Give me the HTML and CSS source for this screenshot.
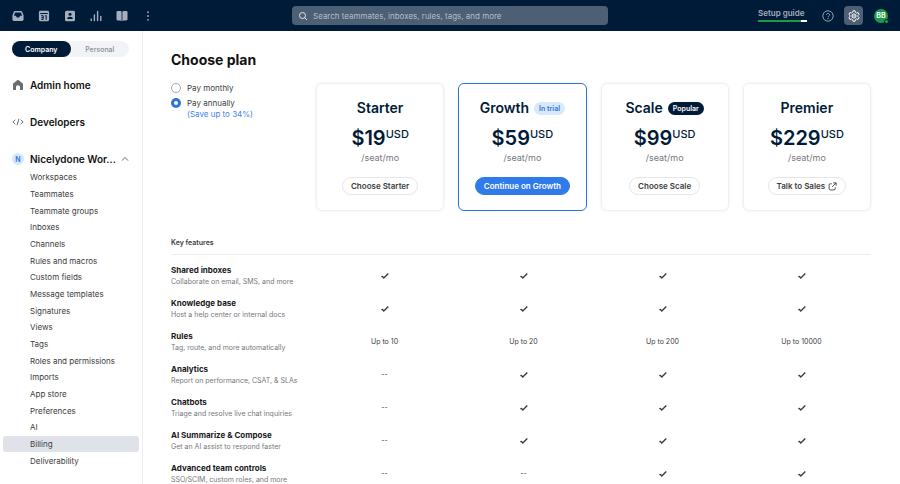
FILE: index.html
```html
<!DOCTYPE html>
<html lang="en">
<head>
  <meta charset="UTF-8">
  <meta name="viewport" content="width=device-width, initial-scale=1.0">
  <title>Choose plan</title>
  <link rel="stylesheet" href="styles.css">
</head>
<body>

  <!-- Shared icons -->
  <svg class="sprite" aria-hidden="true">
    <symbol id="check" viewBox="0 0 10 10">
      <path d="M1.300 5.600 2.400 5.500 3.800 7 8.300 2.500" fill="none" stroke="currentColor" stroke-width="1.400"/>
    </symbol>
  </svg>

  <header class="topbar">
    <nav class="apps" aria-label="Apps">
      <a href="#" aria-label="Inbox">
        <svg viewBox="0 0 12 12"><path fill="currentColor" fill-rule="evenodd" d="M3 1h6c.6 0 1 .3 1.200.8L11.600 5.500V9.200c0 1-.7 1.700-1.700 1.700H2.100C1.100 10.900.4 10.200.4 9.200V5.500L1.800 1.800C2 1.300 2.400 1 3 1Zm.1 1.400L1.900 5.700h2c.3 1.300 1.100 1.900 2.100 1.900s1.800-.6 2.100-1.900h2L8.900 2.400Z"/></svg>
      </a>
      <a href="#" aria-label="Calendar">
        <svg viewBox="0 0 12 12"><path fill="currentColor" fill-rule="evenodd" d="M2.500.8h7c.9 0 1.600.7 1.600 1.600v7.200c0 .9-.7 1.600-1.600 1.600h-7C1.600 11.200.9 10.500.9 9.600V2.400C.9 1.500 1.600.8 2.500.8ZM2.200 3v1h7.600V3Z"/><path fill="none" stroke="#001b38" d="M3.200 5.700h2v3.700h-2M3.500 7.500h1.700M7 6.100l1.200-.6v4.300"/></svg>
      </a>
      <a href="#" aria-label="Contacts">
        <svg viewBox="0 0 12 12"><rect x="1" y=".8" width="10" height="10.400" rx="1.500" fill="currentColor"/><circle cx="6" cy="4.300" r="1.500" fill="#001b38"/><path fill="#001b38" d="M3.200 9c0-1.500 1-2.300 2.800-2.300S8.800 7.500 8.800 9Z"/></svg>
      </a>
      <a href="#" aria-label="Analytics">
        <svg viewBox="0 0 12 12"><path fill="none" stroke="currentColor" stroke-width="1.400" stroke-linecap="round" d="M1.200 9v1.500M4.400 5v5.500M7.600 1.500v9M10.800 6.500v4"/></svg>
      </a>
      <a href="#" aria-label="Knowledge base">
        <svg viewBox="0 0 12 12"><path fill="currentColor" d="M1.800 1h2.400c.8 0 1.400.5 1.400 1.200v9c-.4-.5-.9-.7-1.500-.7H1.800c-.8 0-1.300-.5-1.300-1.200V2.200C.5 1.500 1 1 1.800 1ZM10.200 1H7.800c-.8 0-1.400.5-1.400 1.200v9c.4-.5.9-.7 1.500-.7h2.300c.8 0 1.300-.5 1.300-1.200V2.200c0-.7-.5-1.200-1.300-1.200Z"/></svg>
      </a>
      <a href="#" aria-label="More">
        <svg viewBox="0 0 12 12"><g fill="currentColor"><circle cx="6" cy="2.200" r=".9"/><circle cx="6" cy="6" r=".9"/><circle cx="6" cy="9.800" r=".9"/></g></svg>
      </a>
    </nav>

    <label class="search">
      <svg viewBox="0 0 10 10" aria-hidden="true"><g fill="none" stroke="currentColor"><circle cx="4.500" cy="4.500" r="3"/><path d="m6.700 6.700 2.300 2.300"/></g></svg>
      <input type="search" aria-label="Search" placeholder="Search teammates, inboxes, rules, tags, and more">
    </label>

    <div class="tools">
      <a class="setup" href="#">Setup guide<span class="progress"><span class="progress-fill"></span></span></a>
      <button class="tool" aria-label="Help">
        <svg viewBox="0 0 12 12"><g fill="none" stroke="currentColor" stroke-width=".9"><circle cx="6" cy="6" r="5.200"/><path d="M4.500 4.900c0-2 3.100-2 3.100-.1 0 1.200-1.600 1.200-1.600 2.400"/></g><circle cx="6" cy="8.700" r=".6" fill="currentColor"/></svg>
      </button>
      <button class="tool tool-active" aria-label="Settings">
        <svg viewBox="0 0 12 12"><g fill="none" stroke="currentColor" stroke-linejoin="round"><path d="M5 .8h2l.4 1.500 1.200.7 1.500-.4 1 1.700L10 5.400v1.200l1.100 1.100-1 1.700L8.600 9l-1.200.7L7 11.200H5l-.4-1.500L3.400 9l-1.500.4-1-1.700L2 6.600V5.400L.9 4.300l1-1.700 1.500.4 1.200-.7Z"/><path d="m6 3.800 1.900 1.100v2.200L6 8.200 4.100 7.100V4.900Z"/><circle cx="6" cy="6" r=".4"/></g></svg>
      </button>
      <button class="avatar" aria-label="Account">BB<span class="status"></span></button>
    </div>
  </header>

  <div class="layout">
    <!-- Left side - settings navigation -->
    <aside class="sidebar">
      <div class="toggle">
        <button class="toggle-on">Company</button>
        <button>Personal</button>
      </div>

      <nav class="menu" aria-label="Settings">
        <a class="section" href="#">
          <svg viewBox="0 0 12 12"><path fill="currentColor" d="M5.200 1.200c.5-.4 1.100-.4 1.600 0l3.700 3.100c.3.300.5.600.5 1v4.600c0 .6-.4 1-1 1H8V8.200C8 7 7.200 6.200 6 6.200S4 7 4 8.200v2.700H2c-.6 0-1-.4-1-1V5.300c0-.4.2-.7.5-1Z"/></svg>
          Admin home
        </a>
        <a class="section" href="#">
          <svg viewBox="0 0 12 12"><path fill="none" stroke="currentColor" d="M3.300 3.800.9 6l2.400 2.200M8.700 3.800 11.100 6 8.700 8.200M6.900 2.800 5.100 9.200"/></svg>
          Developers
        </a>
        <a class="section" href="#">
          <span class="initial">N</span>
          Nicelydone Wor...
          <svg class="caret" viewBox="0 0 8 8"><path fill="none" stroke="currentColor" d="m1 5.600 3-3.200 3 3.200"/></svg>
        </a>
        <ul class="links">
          <li><a href="#">Workspaces</a></li>
          <li><a href="#">Teammates</a></li>
          <li><a href="#">Teammate groups</a></li>
          <li><a href="#">Inboxes</a></li>
          <li><a href="#">Channels</a></li>
          <li><a href="#">Rules and macros</a></li>
          <li><a href="#">Custom fields</a></li>
          <li><a href="#">Message templates</a></li>
          <li><a href="#">Signatures</a></li>
          <li><a href="#">Views</a></li>
          <li><a href="#">Tags</a></li>
          <li><a href="#">Roles and permissions</a></li>
          <li><a href="#">Imports</a></li>
          <li><a href="#">App store</a></li>
          <li><a href="#">Preferences</a></li>
          <li><a href="#">AI</a></li>
          <li><a class="current" href="#" aria-current="page">Billing</a></li>
          <li><a href="#">Deliverability</a></li>
        </ul>
      </nav>
    </aside>

    <!-- Right side - plans -->
    <main class="content">
      <h1>Choose plan</h1>

      <div class="plans">
        <div class="billing">
          <label><input type="radio" name="billing"><span>Pay monthly</span></label>
          <label><input type="radio" name="billing" checked><span>Pay annually<br><span class="save">(Save up to 34%)</span></span></label>
        </div>

        <section class="card">
          <h2>Starter</h2>
          <p class="price">$19<span class="currency">USD</span></p>
          <p class="per">/seat/mo</p>
          <button class="btn">Choose Starter</button>
        </section>
        <section class="card card-active">
          <h2>Growth <span class="badge">In trial</span></h2>
          <p class="price">$59<span class="currency">USD</span></p>
          <p class="per">/seat/mo</p>
          <button class="btn btn-primary">Continue on Growth</button>
        </section>
        <section class="card">
          <h2>Scale <span class="badge badge-dark">Popular</span></h2>
          <p class="price">$99<span class="currency">USD</span></p>
          <p class="per">/seat/mo</p>
          <button class="btn">Choose Scale</button>
        </section>
        <section class="card">
          <h2>Premier</h2>
          <p class="price">$229<span class="currency">USD</span></p>
          <p class="per">/seat/mo</p>
          <button class="btn">Talk to Sales
            <svg viewBox="0 0 10 10" aria-hidden="true"><path fill="none" stroke="currentColor" d="M4.200 2H2.500C1.700 2 1.200 2.500 1.200 3.300v4.200c0 .8.500 1.300 1.300 1.300h4.200c.8 0 1.300-.5 1.300-1.300V5.800M5.800 1h3.200v3.200M9 1 4.600 5.400"/></svg>
          </button>
        </section>
      </div>

      <table class="features">
        <thead>
          <tr><th class="feature" scope="col">Key features</th><td></td><td></td><td></td><td></td></tr>
        </thead>
        <tbody>
          <tr>
            <th scope="row">Shared inboxes<small>Collaborate on email, SMS, and more</small></th>
            <td><svg><use href="#check"/></svg></td>
            <td><svg><use href="#check"/></svg></td>
            <td><svg><use href="#check"/></svg></td>
            <td><svg><use href="#check"/></svg></td>
          </tr>
          <tr>
            <th scope="row">Knowledge base<small>Host a help center or internal docs</small></th>
            <td><svg><use href="#check"/></svg></td>
            <td><svg><use href="#check"/></svg></td>
            <td><svg><use href="#check"/></svg></td>
            <td><svg><use href="#check"/></svg></td>
          </tr>
          <tr>
            <th scope="row">Rules<small>Tag, route, and more automatically</small></th>
            <td>Up to 10</td>
            <td>Up to 20</td>
            <td>Up to 200</td>
            <td>Up to 10000</td>
          </tr>
          <tr>
            <th scope="row">Analytics<small>Report on performance, CSAT, &amp; SLAs</small></th>
            <td>--</td>
            <td><svg><use href="#check"/></svg></td>
            <td><svg><use href="#check"/></svg></td>
            <td><svg><use href="#check"/></svg></td>
          </tr>
          <tr>
            <th scope="row">Chatbots<small>Triage and resolve live chat inquiries</small></th>
            <td>--</td>
            <td><svg><use href="#check"/></svg></td>
            <td><svg><use href="#check"/></svg></td>
            <td><svg><use href="#check"/></svg></td>
          </tr>
          <tr>
            <th scope="row">AI Summarize &amp; Compose<small>Get an AI assist to respond faster</small></th>
            <td>--</td>
            <td><svg><use href="#check"/></svg></td>
            <td><svg><use href="#check"/></svg></td>
            <td><svg><use href="#check"/></svg></td>
          </tr>
          <tr>
            <th scope="row">Advanced team controls<small>SSO/SCIM, custom roles, and more</small></th>
            <td>--</td>
            <td>--</td>
            <td><svg><use href="#check"/></svg></td>
            <td><svg><use href="#check"/></svg></td>
          </tr>
        </tbody>
      </table>
    </main>
  </div>

</body>
</html>
```

FILE: styles.css
```css
* {
  box-sizing: border-box;
}

body {
  margin: 0;
  height: 100vh;
  display: flex;
  flex-direction: column;
  overflow: hidden;
  font-family: Inter, "Liberation Sans", sans-serif;
  font-size: 8px;
  color: #3c3d40;
  background: #fff;
}

button,
input {
  font-family: inherit;
}

button {
  border: none;
  padding: 0;
  background: none;
  cursor: pointer;
}

a {
  color: inherit;
  text-decoration: none;
}

h1, h2, p, ul {
  margin: 0;
  padding: 0;
}

.sprite {
  display: none;
}

/* Top bar */
.topbar {
  display: grid;
  grid-template-columns: 1fr 316px 1fr;
  align-items: center;
  flex: none;
  height: 31px;
  padding: 0 12px;
  background: #001b38;
  color: #a3afbf;
}

.apps,
.tools {
  display: flex;
  align-items: center;
}

.apps {
  gap: 14px;
}

.apps svg {
  display: block;
  width: 12px;
  height: 12px;
}

.search {
  display: flex;
  align-items: center;
  gap: 5px;
  height: 19px;
  padding: 0 6px;
  border-radius: 4px;
  background: #4d5f74;
  color: #e3e8ee;
}

.search svg {
  width: 10px;
  height: 10px;
}

.search input {
  flex: 1;
  border: none;
  padding: 0;
  outline: none;
  background: none;
  font-size: 8px;
  color: #fff;
}

.search input::placeholder {
  color: #b3bdc9;
  opacity: 1;
}

.tools {
  justify-content: flex-end;
}

.setup {
  min-width: 49px;
  margin-right: 11px;
  margin-bottom: 1px;
  font-weight: 600;
  line-height: 11px;
}

.progress {
  display: block;
  height: 2px;
  margin-top: 1px;
  background: #fff;
}

.progress-fill {
  display: block;
  width: 88%;
  height: 2px;
  background: #1b9b45;
}

.tool {
  display: grid;
  place-items: center;
  width: 19px;
  height: 19px;
  margin-right: 7px;
  border-radius: 4px;
  color: #a3afbf;
}

.tool svg {
  width: 12px;
  height: 12px;
}

.tool-active {
  margin-right: 11px;
  background: #4d5f74;
  color: #fff;
}

.avatar {
  position: relative;
  width: 14px;
  height: 14px;
  border-radius: 50%;
  background: #1b9b45;
  color: #fff;
  font-size: 7px;
  font-weight: 700;
}

.status {
  position: absolute;
  right: -1px;
  bottom: -1px;
  width: 5px;
  height: 5px;
  border: 1px solid #001b38;
  border-radius: 50%;
  background: #1b9b45;
}

.layout {
  display: flex;
  flex: 1;
  min-height: 0;
}

/* Sidebar */
.sidebar {
  display: flex;
  flex-direction: column;
  flex: none;
  width: 143px;
  padding: 10px 3px 15px;
  border-right: 1px solid #ececee;
}

.toggle {
  display: flex;
  flex: none;
  height: 16px;
  margin: 0 10px 0 9px;
  border-radius: 8px;
  background: #f1f3f6;
}

.toggle button {
  flex: 1;
  border-radius: 8px;
  font-size: 7px;
  font-weight: 500;
  color: #8b9097;
}

.toggle .toggle-on {
  background: #001b38;
  color: #fff;
  font-weight: 600;
}

.menu {
  display: flex;
  flex-direction: column;
  flex: 1;
  min-height: 0;
  padding-top: 20px;
}

.section {
  display: flex;
  align-items: center;
  flex: none;
  height: 16px;
  margin-bottom: 21px;
  padding: 0 10px 0 9px;
  font-size: 10px;
  font-weight: 600;
  white-space: nowrap;
  color: #111;
}

.section svg {
  width: 12px;
  height: 12px;
  margin-right: 6px;
  color: #6b6c70;
}

.section:nth-of-type(3) {
  margin-bottom: 2px;
}

.initial {
  display: grid;
  place-items: center;
  width: 12px;
  height: 12px;
  margin-right: 6px;
  border-radius: 50%;
  background: #d5e8fd;
  color: #2f73d9;
  font-size: 7px;
}

.section .caret {
  width: 8px;
  height: 8px;
  margin: 0 0 0 auto;
}

.links {
  display: flex;
  flex-direction: column;
  flex: 1;
  min-height: 0;
  list-style: none;
}

/* rows tighten slightly on short windows */
.links li {
  display: flex;
  flex: 0 1 17px;
  min-height: 16px;
}

.links a {
  display: flex;
  align-items: center;
  flex: 1;
  padding-left: 27px;
  border-radius: 3px;
}

.links .current {
  background: #e0e2ea;
}

/* Plans */
.content {
  flex: 1;
  min-width: 0;
  padding: 20px 29px 0 28px;
}

h1 {
  font-size: 14px;
  font-weight: 700;
  line-height: 18px;
  color: #111;
}

.plans {
  display: grid;
  grid-template-columns: 131px repeat(4, 1fr);
  column-gap: 14px;
  margin-top: 14px;
}

.billing {
  display: flex;
  flex-direction: column;
  gap: 4px;
}

.billing label {
  display: flex;
  gap: 6px;
  line-height: 11px;
}

.billing input {
  appearance: none;
  flex: none;
  width: 10px;
  height: 10px;
  margin: 0;
  border: 1px solid #a4a5a8;
  border-radius: 50%;
  background: #fff;
}

.billing input:checked {
  border: 3px solid #2f73d9;
}

.save {
  color: #3d83e6;
}

.card {
  display: flex;
  flex-direction: column;
  align-items: center;
  height: 128px;
  padding-top: 14px;
  border: 1px solid #f0f0f2;
  border-radius: 6px;
  box-shadow: 0 0 3px rgba(0, 0, 0, 0.08);
}

.card-active {
  border-color: #2f73d9;
}

.card h2 {
  display: flex;
  align-items: center;
  gap: 5px;
  font-size: 14px;
  font-weight: 600;
  line-height: 20px;
  color: #001b38;
}

.badge {
  padding: 0 5px;
  border-radius: 7px;
  background: #d9e8fc;
  color: #2f73d9;
  font-size: 7px;
  line-height: 13px;
}

.badge-dark {
  background: #001b38;
  color: #fff;
}

.price {
  display: flex;
  margin-top: 7px;
  font-size: 20px;
  font-weight: 600;
  line-height: 26px;
  color: #001b38;
}

.currency {
  font-size: 11px;
  font-weight: 500;
  line-height: 18px;
}

.per {
  font-size: 9px;
  line-height: 13px;
  color: #77787c;
}

.btn {
  display: flex;
  align-items: center;
  gap: 3px;
  height: 18px;
  margin-top: 13px;
  padding: 0 8px;
  border: 1px solid #e6e6e9;
  border-radius: 9px;
  font-size: 8px;
  font-weight: 600;
  color: #3c3d40;
}

.btn svg {
  width: 9px;
  height: 9px;
}

.btn-primary {
  border-color: #2f7bea;
  background: #2f7bea;
  color: #fff;
}

/* Feature table */
.features {
  width: 100%;
  margin-top: 22px;
  border-collapse: collapse;
  table-layout: fixed;
}

.features th {
  padding: 0;
  text-align: left;
  font-size: 8px;
  font-weight: 700;
  line-height: 11px;
  color: #18191b;
}

.features td {
  padding: 0;
  text-align: center;
  font-size: 7px;
}

.features thead tr {
  height: 21px;
  border-bottom: 1px solid #ececee;
}

.features .feature {
  width: 144px;
  padding-bottom: 2px;
  font-size: 7px;
  font-weight: 600;
  color: #3c3d40;
}

.features tbody tr {
  height: 33px;
}

.features tbody tr:first-child {
  height: 38px;
}

.features tbody tr:first-child > * {
  padding-top: 5px;
}

.features small {
  display: block;
  font-size: 7px;
  font-weight: 400;
  color: #77787c;
}

.features svg {
  display: block;
  width: 10px;
  height: 10px;
  margin: 0 auto;
}
```
